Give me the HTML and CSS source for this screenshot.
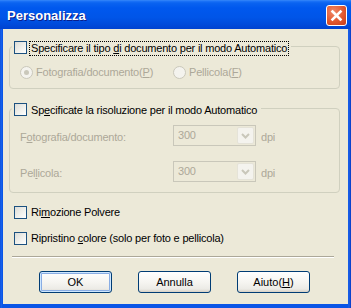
FILE: index.html
```html
<!DOCTYPE html>
<html>
<head>
<meta charset="utf-8">
<link rel="stylesheet" href="styles.css">
</head>
<body>
<div class="window">
  <div class="titlebar">
    <span class="title">Personalizza</span>
    <span class="close"><svg width="19" height="19" viewBox="0 0 19 19"><path d="M5.5 5.5 L13.5 13.5 M13.5 5.5 L5.5 13.5" stroke="#fff" stroke-width="2.6" stroke-linecap="square"/></svg></span>
  </div>
  <div class="client">
    <div class="group g1">
      <div class="legend">
        <span class="cb"></span>
        <span class="lbl focus">Specificare il tipo <u>d</u>i documento per il modo Automatico</span>
      </div>
      <div class="radios">
        <div class="ritem first"><span class="radio checked"></span><span class="dis">Fotografia/documento(<u>P</u>)</span></div>
        <div class="ritem"><span class="radio"></span><span class="dis">Pellicola(<u>F</u>)</span></div>
      </div>
    </div>
    <div class="group g2">
      <div class="legend">
        <span class="cb"></span>
        <span class="lbl">Sp<u>e</u>cificate la risoluzione per il modo Automatico</span>
      </div>
      <div class="row r1">
        <span class="rlabel dis">F<u>o</u>tografia/documento:</span>
        <span class="combo"><span class="val">300</span><span class="drop"><svg width="9" height="6" viewBox="0 0 9 6"><path d="M1 1 L4.5 4.5 L8 1" fill="none" stroke="#C9C7BA" stroke-width="2"/></svg></span></span>
        <span class="dpi dis">dpi</span>
      </div>
      <div class="row r2">
        <span class="rlabel dis">Pel<u>l</u>icola:</span>
        <span class="combo"><span class="val">300</span><span class="drop"><svg width="9" height="6" viewBox="0 0 9 6"><path d="M1 1 L4.5 4.5 L8 1" fill="none" stroke="#C9C7BA" stroke-width="2"/></svg></span></span>
        <span class="dpi dis">dpi</span>
      </div>
    </div>
    <div class="check c3"><span class="cb"></span><span class="lbl">Ri<u>m</u>ozione Polvere</span></div>
    <div class="check c4"><span class="cb"></span><span class="lbl">Ripristino <u>c</u>olore (solo per foto e pellicola)</span></div>
    <div class="sep"></div>
    <div class="buttons">
      <span class="btn default">OK</span>
      <span class="btn">Annulla</span>
      <span class="btn">Aiuto(<u>H</u>)</span>
    </div>
  </div>
</div>
</body>
</html>
```
FILE: styles.css
```css
html, body {
  margin: 0;
  padding: 0;
  background: #0A4BDF;
}
.window {
  width: 351px;
  height: 308px;
  display: flex;
  flex-direction: column;
  background: linear-gradient(to right, #0842CF 0, #1E6BF2 1px, #0A55E6 2px, #0A55E6 348px, #1F63E8 349px, #0637C2 351px);
  font-family: "Liberation Sans", Arial, sans-serif;
  font-size: 11px;
  letter-spacing: -0.2px;
  color: #000;
}
.titlebar {
  height: 29px;
  flex: none;
  display: flex;
  justify-content: space-between;
  align-items: flex-start;
  background: linear-gradient(to bottom, #3B8CF8 0, #1E74F8 1px, #0A63F0 3px, #0058EE 8px, #0055E8 60%, #004ADA 85%, #0042D0 100%);
}
.title {
  margin: 8px 0 0 7px;
  font-size: 13px;
  line-height: 16px;
  font-weight: bold;
  letter-spacing: 0;
  color: #fff;
  text-shadow: 1px 1px 0 #0A1E8A;
}
.close {
  width: 21px;
  height: 21px;
  box-sizing: border-box;
  margin: 5px 4px 0 0;
  border: 1px solid #fff;
  border-radius: 3px;
  background: radial-gradient(circle at 35% 30%, #F0896A 0, #E2582F 55%, #C63B1A 100%);
  display: flex;
  align-items: center;
  justify-content: center;
}
.close svg { display: block; }
.client {
  flex: 1;
  margin: 0 3px 4px 3px;
  background: #ECE9D8;
  padding-top: 17px;
}
.group {
  width: 331px;
  box-sizing: border-box;
  margin-left: 6px;
  border: 1px solid #D0D0BF;
  border-radius: 4px;
}
.g1 { padding-bottom: 9px; }
.g2 { margin-top: 19px; padding-bottom: 10px; }
.legend {
  display: flex;
  align-items: flex-start;
  align-self: flex-start;
  width: max-content;
  margin: -6px 0 0 2px;
  padding: 0 2px;
  background: #ECE9D8;
  height: 15px;
}
.cb {
  width: 13px;
  height: 13px;
  box-sizing: border-box;
  flex: none;
  border: 1px solid #1C5180;
  background: linear-gradient(135deg, #DCDCD7 0%, #F2F2EE 60%, #FFFFFF 100%);
  margin-right: 2px;
}
.lbl {
  line-height: 13px;
  border: 1px solid transparent;
  padding: 0 1px;
}
.lbl.focus {
  border: 1px dotted #000;
}
u { text-decoration: underline; text-underline-offset: 1px; }
.dis { color: #ACA899; }
.radios {
  display: flex;
  margin: 10px 0 0 10px;
  height: 13px;
  line-height: 13px;
}
.ritem {
  display: flex;
  align-items: center;
}
.ritem.first { width: 153px; }
.radio {
  width: 13px;
  height: 13px;
  box-sizing: border-box;
  border: 1px solid #CAC8BB;
  border-radius: 50%;
  background: #F4F3EE;
  margin-right: 3px;
  display: flex;
  align-items: center;
  justify-content: center;
}
.radio.checked::after {
  content: "";
  width: 5px;
  height: 5px;
  border-radius: 50%;
  background: #CAC8BB;
}
.row {
  display: flex;
  align-items: center;
  margin-left: 10px;
  height: 21px;
}
.r1 { margin-top: 7px; }
.r2 { margin-top: 15px; }
.rlabel { width: 153px; padding-top: 2px; }
.combo {
  width: 83px;
  height: 21px;
  box-sizing: border-box;
  border: 1px solid #C9C7BA;
  background: #ECE9D8;
  display: flex;
  justify-content: space-between;
  align-items: stretch;
  padding: 1px;
}
.val {
  color: #ACA899;
  padding-left: 3px;
  line-height: 17px;
}
.drop {
  width: 17px;
  box-sizing: border-box;
  border: 1px solid #E5E3D8;
  border-radius: 2px;
  background: #F4F3EE;
  display: flex;
  align-items: center;
  justify-content: center;
}
.drop svg { display: block; }
.dpi { margin-left: 5px; padding-top: 2px; }
.check {
  display: flex;
  align-items: flex-start;
  margin-left: 11px;
  height: 13px;
}
.check .lbl { margin-top: -1px; }
.c3 { margin-top: 13px; }
.c4 { margin-top: 13px; }
.sep {
  margin: 11px 0 0 9px;
  width: 322px;
  height: 1px;
  border-top: 1px solid #ACA899;
  border-bottom: 1px solid #fff;
  box-sizing: content-box;
  height: 0;
}
.buttons {
  display: flex;
  gap: 26px;
  margin: 13px 0 0 36px;
}
.btn {
  width: 73px;
  height: 22px;
  box-sizing: border-box;
  border: 1px solid #003C74;
  border-radius: 3px;
  background: linear-gradient(to bottom, #FFFFFF 0, #F6F5F1 50%, #ECEBE6 85%, #D6D0C5 100%);
  display: flex;
  align-items: center;
  justify-content: center;
  letter-spacing: 0;
}
.btn.default {
  box-shadow: inset 0 0 0 1px #CEE7FF, inset 0 0 0 2px #89ADE4;
}
```
